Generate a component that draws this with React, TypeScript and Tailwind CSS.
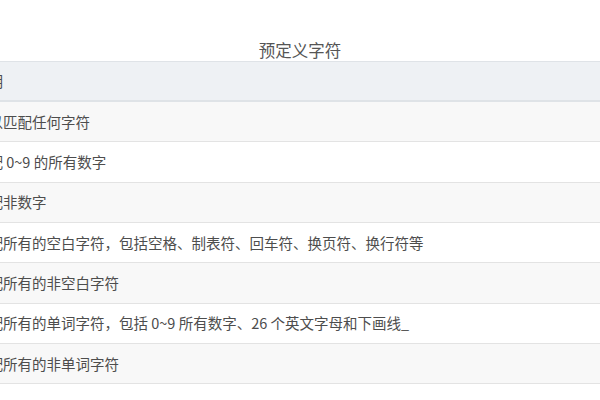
import React from "react";

const rows: [string, string][] = [
  [".", "可以匹配任何字符"],
  ["\\d", "匹配 0~9 的所有数字"],
  ["\\D", "匹配非数字"],
  ["\\s", "匹配所有的空白字符，包括空格、制表符、回车符、换页符、换行符等"],
  ["\\S", "匹配所有的非空白字符"],
  ["\\w", "匹配所有的单词字符，包括 0~9 所有数字、26 个英文字母和下画线_"],
  ["\\W", "匹配所有的非单词字符"],
];

export default function App() {
  return (
    <div
      className="w-[600px] h-[400px] bg-white overflow-hidden text-[#4d4d4d]"
      style={{ fontFamily: '"Noto Sans CJK SC", "Noto Sans", sans-serif' }}
    >
      <div className="h-[61px] pt-[39px] flex items-center justify-center text-[16.5px] leading-[22px] text-[#555]">
        预定义字符
      </div>
      <div className="ml-[-126px] w-[760px] flex flex-col">
        <div className="h-[41px] flex items-center bg-[#eef1f4] border-t border-b-2 border-[#dfe3e7] text-[14.5px]">
          <div className="w-[88px]">字符</div>
          <div className="pl-3">说明</div>
        </div>
        {rows.map(([c, d], i) => (
          <div
            key={i}
            className={`h-[40.33px] flex items-center border-b border-[#e3e3e3] text-[14.5px] ${
              i % 2 === 0 ? "bg-[#f8f8f8]" : "bg-white"
            }`}
          >
            <div className="w-[88px]">{c}</div>
            <div className="pl-3 whitespace-nowrap">{d}</div>
          </div>
        ))}
      </div>
    </div>
  );
}
